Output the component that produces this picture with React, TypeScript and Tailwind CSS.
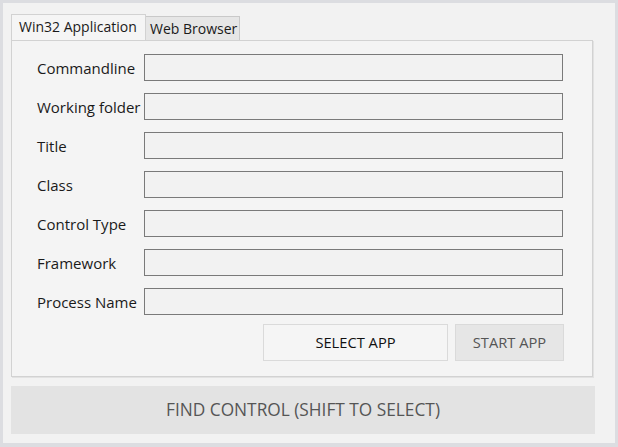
import React from "react";

const fields = [
  "Commandline",
  "Working folder",
  "Title",
  "Class",
  "Control Type",
  "Framework",
  "Process Name",
];

const App: React.FC = () => {
  return (
    <div className="w-[618px] h-[447px] bg-[#dcdde1] pt-[3px] px-[3px] pb-[4px] font-['Open_Sans',sans-serif] text-[#1a1a1a]">
      <div className="h-full bg-[#f2f2f2] pl-[8px] pt-[11px]">
        {/* tabs */}
        <div className="flex items-end h-[26px]">
          <div className="w-[135px] h-[26px] border border-b-0 border-[#d2d2d2] bg-[#f5f5f5] text-[14px] pl-[7px] pt-[2px] leading-[20px] whitespace-nowrap">
            Win32 Application
          </div>
          <div className="w-[94px] h-[24px] border border-l-0 border-b-0 border-[#c9c9c9] bg-[#e6e6e6] text-[14px] pl-[4px] pt-[2px] leading-[20px] whitespace-nowrap">
            Web Browser
          </div>
        </div>

        {/* panel */}
        <div className="w-[582px] h-[337px] border border-[#d2d2d2] bg-[#f4f4f4] shadow-[1px_1px_0_#e2e2e2] pl-[25px] pt-[13px]">
          <div className="flex flex-col gap-[12px]">
            {fields.map((f) => (
              <div key={f} className="flex items-center h-[27px]">
                <div className="w-[107px] text-[15px] pt-[1px] whitespace-nowrap">{f}</div>
                <div className="w-[419px] h-[27px] border border-[#7a7a7a] bg-[#f2f2f2]" />
              </div>
            ))}
          </div>
          <div className="flex justify-end gap-[7px] w-[527px] mt-[9px]">
            <button className="w-[185px] h-[37px] border border-[#dadada] bg-[#f5f5f5] text-[14.7px] text-[#111]">
              SELECT APP
            </button>
            <button className="w-[109px] h-[37px] border border-[#dadada] bg-[#e6e6e6] text-[14.7px] text-[#555]">
              START APP
            </button>
          </div>
        </div>

        {/* find control */}
        <button className="mt-[9px] w-[584px] h-[48px] bg-[#e3e3e3] text-[17.3px] text-[#555]">
          FIND CONTROL (SHIFT TO SELECT)
        </button>
      </div>
    </div>
  );
};

export default App;
